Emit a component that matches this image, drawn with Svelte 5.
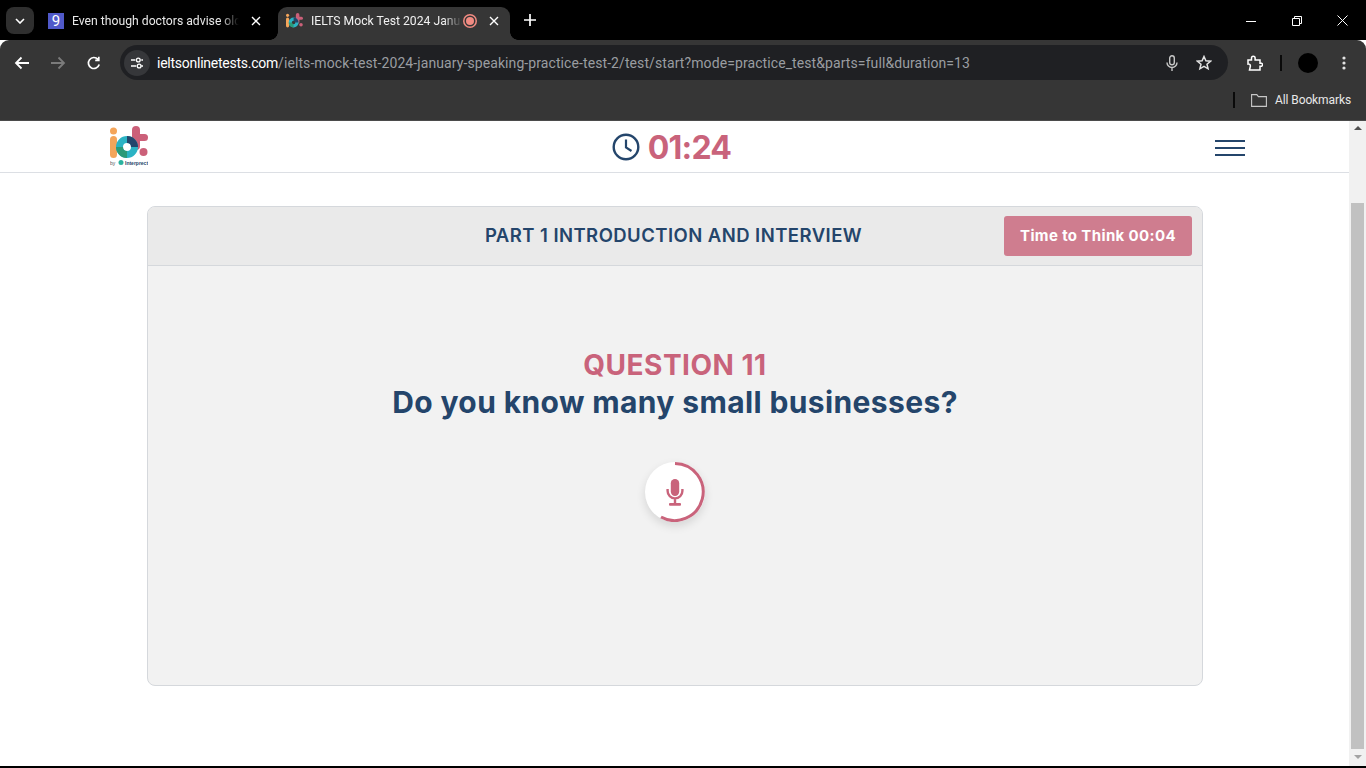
<script>
  const ARC = 'M30 1.5 A28.5 28.5 0 1 1 16 55';
</script>

{#snippet logo()}
  <circle cx="3.5" cy="5" r="3.5" fill="#f4a55a" />
  <rect x="0" y="10" width="7" height="22" rx="3.5" fill="#f4a55a" />
  <rect x="22" y="0" width="8" height="24" rx="4" fill="#cb6079" />
  <rect x="22" y="8" width="16" height="7" rx="3.5" fill="#cb6079" />
  <circle cx="33.5" cy="26" r="4" fill="#cb6079" />
  <circle cx="17" cy="21" r="7.5" fill="none" stroke="#2bb3c4" stroke-width="7" />
  <path d="M9.5 21 A7.5 7.5 0 0 0 17 28.5" fill="none" stroke="#2c9a78" stroke-width="7" />
  <path d="M17 13.5 A7.5 7.5 0 0 1 24.5 21" fill="none" stroke="#24456b" stroke-width="7" />
{/snippet}

<div class="window">
  <div class="tabstrip">
    <button class="tab-menu" aria-label="Search tabs">
      <svg width="10" height="6" viewBox="0 0 10 6"><path d="M1 1l4 4 4-4" fill="none" stroke="#fff" stroke-width="1.6" /></svg>
    </button>
    <div class="tab">
      <span class="fav-nine">9</span>
      <span class="tab-title">Even though doctors advise old</span>
      <svg class="tab-close" width="10" height="10" viewBox="0 0 10 10"><path d="M1 1l8 8M9 1l-8 8" stroke="#fff" stroke-width="1.4" /></svg>
    </div>
    <div class="tab active">
      <svg class="fav-logo" width="17" height="15" viewBox="0 0 38 33">{@render logo()}</svg>
      <span class="tab-title short">IELTS Mock Test 2024 January</span>
      <span class="rec"></span>
      <svg class="tab-close" width="10" height="10" viewBox="0 0 10 10"><path d="M1 1l8 8M9 1l-8 8" stroke="#fff" stroke-width="1.4" /></svg>
    </div>
    <svg class="new-tab" width="12" height="12" viewBox="0 0 12 12"><path d="M6 0v12M0 6h12" stroke="#fff" stroke-width="1.7" /></svg>
    <div class="win-controls">
      <svg width="10" height="10" viewBox="0 0 10 10"><path d="M0 5.5h10" stroke="#fff" /></svg>
      <svg width="10" height="10" viewBox="0 0 10 10"><path d="M.5 2.5h7v7h-7zM2.5 2.5v-2h7v7h-2" fill="none" stroke="#fff" /></svg>
      <svg width="11" height="11" viewBox="0 0 11 11"><path d="M.5.5l10 10M10.5.5l-10 10" stroke="#fff" /></svg>
    </div>
  </div>

  <div class="toolbar">
    <svg width="16" height="14" viewBox="0 0 16 14"><path d="M15 7H2M7.500 1.500L2 7l5.500 5.500" fill="none" stroke="#fff" stroke-width="1.8" /></svg>
    <svg width="16" height="14" viewBox="0 0 16 14"><path d="M1 7h13M8.500 1.500L14 7l-5.500 5.500" fill="none" stroke="#7b7b7b" stroke-width="1.8" /></svg>
    <svg width="14" height="14" viewBox="0 0 14 14"><path d="M12.200 8.500A5.500 5.500 0 1 1 11 3.300M11.800 .8v3.600H8.200" fill="none" stroke="#fff" stroke-width="1.7" /></svg>
    <div class="omnibox">
      <span class="site-info">
        <svg width="14" height="12" viewBox="0 0 16 14">
          <path d="M1 3.500h5M1 10.500h6M13 10.500h2M13 3.500h2" stroke="#fff" stroke-width="1.700" />
          <circle cx="9.500" cy="3.500" r="2.200" fill="none" stroke="#fff" stroke-width="1.600" />
          <circle cx="10.500" cy="10.500" r="2.200" fill="none" stroke="#fff" stroke-width="1.600" />
        </svg>
      </span>
      <span class="url"><b>ieltsonlinetests.com</b>/ielts-mock-test-2024-january-speaking-practice-test-2/test/start?mode=practice_test&amp;parts=full&amp;duration=13</span>
      <svg class="omni-mic" width="12" height="16" viewBox="0 0 12 16">
        <rect x="3.700" y=".8" width="4.600" height="9" rx="2.300" fill="none" stroke="#c7c7c7" stroke-width="1.400" />
        <path d="M1 7.500a5 5 0 0 0 10 0M6 12.500V16" fill="none" stroke="#c7c7c7" stroke-width="1.400" />
      </svg>
      <svg class="omni-star" width="16" height="16" viewBox="0 0 16 16"><path d="M8 1.500l1.900 4.300 4.600.4-3.500 3 1.100 4.600L8 11.400l-4.100 2.400L5 9.200l-3.500-3 4.600-.4z" fill="none" stroke="#e3e3e3" stroke-width="1.500" /></svg>
    </div>
    <svg class="puzzle" width="16" height="16" viewBox="0 0 16 16"><path d="M1 5h3.500V3a1.800 1.800 0 0 1 3.600 0v2H13v3.200h1.500a1.600 1.600 0 0 1 0 3H13V15H2.500l.8-3.500a2 2 0 0 0-2.300-2.500z" fill="none" stroke="#fff" stroke-width="1.500" /></svg>
    <span class="divider"></span>
    <span class="avatar"></span>
    <svg width="4" height="14" viewBox="0 0 4 14"><circle cx="2" cy="2" r="1.600" fill="#e3e3e3" /><circle cx="2" cy="7" r="1.600" fill="#e3e3e3" /><circle cx="2" cy="12" r="1.600" fill="#e3e3e3" /></svg>
  </div>

  <div class="bookmarks">
    <span class="divider tall"></span>
    <svg width="16" height="13" viewBox="0 0 16 13"><path d="M.6.6h5.200l1.600 2h8v9.800H.6z" fill="none" stroke="#c7c7c7" stroke-width="1.100" /></svg>
    <span>All Bookmarks</span>
  </div>

  <div class="viewport">
    <div class="page">
      <header class="site-header">
        <svg class="logo" width="38" height="40" viewBox="0 0 38 40">
          {@render logo()}
          <text x="0" y="38.500" class="logo-by">by</text>
          <circle cx="11" cy="36.500" r="2.500" fill="#2bb3a0" />
          <text x="15" y="38.500" class="logo-name">Interprect</text>
        </svg>
        <div class="timer">
          <svg width="28" height="28" viewBox="0 0 28 28">
            <circle cx="14" cy="14" r="12.300" fill="none" stroke="#24456b" stroke-width="2.400" />
            <path d="M14 6.500V14.500L19.500 18" fill="none" stroke="#24456b" stroke-width="2.200" />
          </svg>
          <span>01:24</span>
        </div>
        <div class="hamburger"><i></i><i></i><i></i></div>
      </header>

      <main class="content">
        <section class="card">
          <div class="card-head">
            <h2>PART 1 INTRODUCTION AND INTERVIEW</h2>
            <button class="think">Time to Think 00:04</button>
          </div>
          <div class="card-body">
            <h3>QUESTION 11</h3>
            <p>Do you know many small businesses?</p>
            <div class="record">
              <svg width="60" height="60" viewBox="0 0 60 60">
                <path d={ARC} fill="none" stroke="#c9637b" stroke-width="3" />
                <rect x="25.800" y="17" width="8.400" height="17" rx="4.200" fill="#c9637b" />
                <path d="M22.600 27v2a7.400 7.400 0 0 0 14.800 0v-2M30 36v5" fill="none" stroke="#c9637b" stroke-width="2.400" />
                <rect x="24" y="41" width="12" height="2.800" rx="1" fill="#c9637b" />
              </svg>
            </div>
          </div>
        </section>
      </main>
    </div>

    <div class="scrollbar">
      <span class="arrow up"></span>
      <div class="track"><div class="thumb"></div></div>
      <span class="arrow down"></span>
    </div>
  </div>
  <div class="taskbar-edge"></div>
</div>

<style>
  :global(body) {
    margin: 0;
    overflow: hidden;
  }

  .window {
    height: 768px;
    display: flex;
    flex-direction: column;
    font-family: "Liberation Sans", Arial, sans-serif;
    background: #fff;
  }

  .tabstrip {
    height: 40px;
    flex-shrink: 0;
    background: #000;
    display: flex;
    align-items: flex-start;
    box-sizing: border-box;
    padding: 7px 0 0 6px;
  }

  .tab-menu {
    width: 28px;
    height: 27px;
    border: 0;
    padding: 0;
    border-radius: 8px;
    background: #2f2f2f;
    display: flex;
    align-items: center;
    justify-content: center;
  }

  .tab {
    height: 33px;
    box-sizing: border-box;
    display: flex;
    align-items: center;
    color: #e8e8e8;
    font-size: 12.200px;
    font-family: Roboto, sans-serif;
  }

  .tab:not(.active) {
    width: 244px;
    padding: 0 17px 6px 14px;
  }

  .tab.active {
    width: 232px;
    padding: 0 11px 6px 8px;
    background: #363636;
    border-radius: 9px 9px 0 0;
    color: #f1f1f1;
    position: relative;
  }

  .tab.active::before,
  .tab.active::after {
    content: "";
    position: absolute;
    bottom: 0;
    width: 8px;
    height: 8px;
  }

  .tab.active::before {
    left: -8px;
    background: radial-gradient(circle at 0 0, #000 7.500px, #363636 8px);
  }

  .tab.active::after {
    right: -8px;
    background: radial-gradient(circle at 100% 0, #000 7.500px, #363636 8px);
  }

  .fav-nine {
    width: 16px;
    height: 16px;
    flex-shrink: 0;
    background: #5059c9;
    color: #fff;
    font-size: 15px;
    line-height: 16px;
    text-align: center;
  }

  .fav-logo {
    flex-shrink: 0;
  }

  .tab-title {
    flex: 1;
    min-width: 0;
    margin-left: 8px;
    white-space: nowrap;
    overflow: hidden;
    mask-image: linear-gradient(to left, transparent, #000 18px);
  }

  .tab-close {
    flex-shrink: 0;
    margin-left: 12px;
  }

  .active .tab-close {
    margin-left: 15px;
  }

  .rec {
    width: 8px;
    height: 8px;
    flex-shrink: 0;
    margin-left: 4px;
    border-radius: 50%;
    background: #f28b82;
    box-shadow: 0 0 0 1.500px #363636, 0 0 0 3px #f28b82;
  }

  .new-tab {
    margin: 7px 0 0 14px;
  }

  .win-controls {
    margin-left: auto;
    display: flex;
    align-items: center;
    gap: 35.500px;
    padding: 0 18px 0 8px;
    height: 27px;
  }

  .toolbar {
    height: 40px;
    flex-shrink: 0;
    background: #363636;
    border-radius: 9px 9px 0 0;
    display: flex;
    align-items: center;
    box-sizing: border-box;
    padding: 5px 19px 0 14px;
  }

  .toolbar > svg:nth-child(2) {
    margin-left: 20px;
  }

  .toolbar > svg:nth-child(3) {
    margin-left: 21px;
  }

  .omnibox {
    width: 1108px;
    height: 35px;
    flex-shrink: 0;
    margin-left: 19px;
    border-radius: 18px;
    background: #1f2023;
    display: flex;
    align-items: center;
    color: #9a9da1;
    box-sizing: border-box;
  }

  .site-info {
    width: 26px;
    height: 26px;
    margin-left: 4px;
    border-radius: 50%;
    background: #36373a;
    display: flex;
    align-items: center;
    justify-content: center;
    flex-shrink: 0;
  }

  .url {
    margin-left: 7px;
    font-size: 14px;
    font-family: Roboto, sans-serif;
    letter-spacing: 0.09px;
    white-space: nowrap;
  }

  .url b {
    color: #fff;
    font-weight: 400;
    letter-spacing: -0.25px;
  }

  .omni-mic {
    margin-left: auto;
    margin-right: 18px;
  }

  .omni-star {
    margin-right: 16px;
  }

  .puzzle {
    margin-left: 19px;
  }

  .divider {
    width: 2px;
    height: 16px;
    background: #0a0a0a;
    margin-left: 17px;
  }

  .divider.tall {
    margin: 0 8px 0 0;
  }

  .avatar {
    width: 20px;
    height: 20px;
    border-radius: 50%;
    background: #000;
    margin: 0 24px 0 16px;
  }

  .bookmarks {
    height: 41px;
    flex-shrink: 0;
    background: #363636;
    border-bottom: 1px solid #4b4b4b;
    box-sizing: border-box;
    display: flex;
    align-items: center;
    justify-content: flex-end;
    padding: 0 15px 0 0;
    gap: 8px;
    color: #e8e8e8;
    font-size: 12px;
    letter-spacing: -0.1px;
    font-family: Roboto, sans-serif;
  }

  .viewport {
    flex: 1;
    min-height: 0;
    display: flex;
  }

  .page {
    flex: 1;
    min-width: 0;
  }

  .site-header {
    height: 52px;
    box-sizing: border-box;
    border-bottom: 1px solid #dcdfe4;
    padding: 5px 104px 0 110px;
    display: flex;
    justify-content: space-between;
    align-items: flex-start;
  }

  .logo {
    flex-shrink: 0;
  }

  .logo-by,
  .logo-name {
    font-family: "Liberation Sans", sans-serif;
    font-size: 5px;
    fill: #555;
  }

  .logo-name {
    font-weight: 700;
    fill: #24456b;
  }

  .timer {
    display: flex;
    align-items: center;
    gap: 8px;
    margin: 6px 20px 0 0;
    height: 30px;
    color: #c9637b;
    font-family: Inter, sans-serif;
    font-size: 32px;
    font-weight: 700;
    letter-spacing: -0.8px;
  }

  .hamburger {
    width: 30px;
    margin-top: 14px;
    display: flex;
    flex-direction: column;
    gap: 5px;
  }

  .hamburger i {
    display: block;
    height: 2px;
    background: #24456b;
  }

  .content {
    padding: 33px 146px 0 147px;
  }

  .card {
    height: 480px;
    box-sizing: border-box;
    border: 1px solid #d5d8dc;
    border-radius: 8px;
    background: #f2f2f2;
    overflow: hidden;
    display: flex;
    flex-direction: column;
    font-family: Inter, sans-serif;
  }

  .card-head {
    height: 59px;
    flex-shrink: 0;
    box-sizing: border-box;
    background: #eaeaea;
    border-bottom: 1px solid #d5d8dc;
    display: flex;
    align-items: center;
    justify-content: center;
    position: relative;
  }

  .card-head h2 {
    margin: 0 3px 3px 0;
    color: #24456b;
    font-size: 18.500px;
    font-weight: 600;
    letter-spacing: 0.45px;
  }

  .think {
    position: absolute;
    right: 10px;
    top: 9px;
    width: 188px;
    height: 40px;
    border: 0;
    padding: 0 0 2px;
    border-radius: 3px;
    background: #cf7d8f;
    color: #fff;
    font: 700 15px Inter, sans-serif;
    letter-spacing: 0.37px;
  }

  .card-body {
    flex: 1;
    display: flex;
    flex-direction: column;
    align-items: center;
    padding-top: 82px;
  }

  .card-body h3 {
    margin: 0;
    color: #c9637b;
    font-size: 28px;
    font-weight: 700;
    line-height: 34px;
    letter-spacing: 0.5px;
  }

  .card-body p {
    margin: 0;
    color: #24456b;
    font-size: 30px;
    font-weight: 700;
    line-height: 40px;
    letter-spacing: 0.38px;
  }

  .record {
    width: 60px;
    height: 60px;
    margin-top: 40px;
    border-radius: 50%;
    background: #fff;
    box-shadow: 0 4px 10px rgba(0, 0, 0, 0.12);
  }

  .scrollbar {
    width: 17px;
    flex-shrink: 0;
    background: #f1f1f1;
    display: flex;
    flex-direction: column;
    align-items: center;
  }

  .arrow {
    height: 17px;
    flex-shrink: 0;
    width: 0;
    box-sizing: border-box;
    border-left: 4px solid transparent;
    border-right: 4px solid transparent;
  }

  .arrow.up {
    height: 4px;
    margin: 5px 0 8px;
    border-bottom: 4px solid #505050;
  }

  .arrow.down {
    height: 4px;
    margin: 6px 0 7px;
    border-top: 4px solid #a3a3a3;
  }

  .track {
    flex: 1;
    align-self: stretch;
    padding-top: 65px;
    display: flex;
    flex-direction: column;
  }

  .thumb {
    flex: 1;
    margin: 0 2px;
    background: #c1c1c1;
  }

  .taskbar-edge {
    height: 2px;
    flex-shrink: 0;
    background: #000;
  }
</style>
